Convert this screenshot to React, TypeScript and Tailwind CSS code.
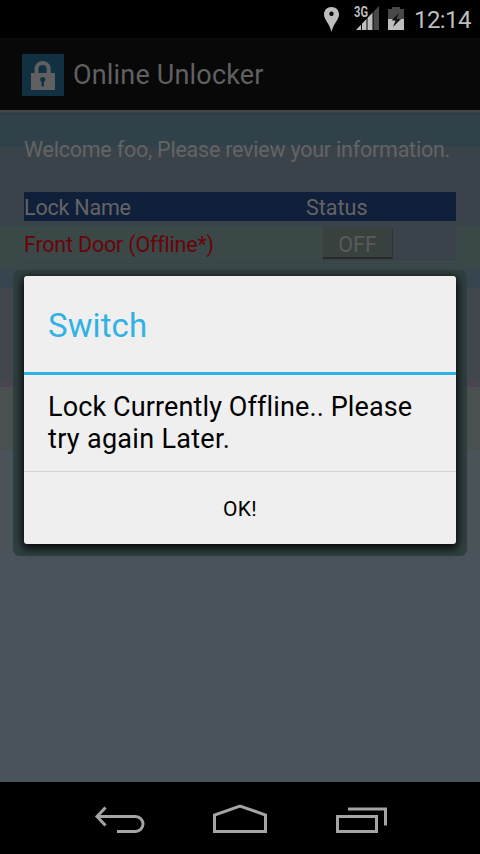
import React from "react";

function StatusBar() {
  return (
    <div className="flex h-[38px] items-center justify-end bg-black pr-[9px] text-[#bebebe]">
      <svg className="mr-[13px] h-[26px] w-[18px]" viewBox="0 0 18 26">
        <path fillRule="evenodd" d="M8.5 1C4 1 1 4 1 8.5C1 14 6.5 17 8.5 26C10.500 17 16 14 16 8.500C16 4 13 1 8.500 1ZM8.500 5.500A2.200 2.200 0 1 1 8.500 9.900A2.200 2.200 0 1 1 8.500 5.500Z" fill="#bebebe" />
      </svg>
      <svg className="mr-[8px] h-[26px] w-[26px] overflow-visible" viewBox="0 0 26 26">
        <path d="M2 24L25 0V24Z" fill="#484848" />
        <path d="M2 24L19 6.300V24Z" fill="#bebebe" />
        <path d="M7.500 0V26M13 0V26M19 0V26" stroke="#000" strokeWidth="1" />
        <text x="0" y="11" fontFamily="Roboto" fontWeight="700" fontSize="14.500" textLength="14" lengthAdjust="spacingAndGlyphs" fill="#bebebe" stroke="#000" strokeWidth="1" paintOrder="stroke">3G</text>
      </svg>
      <svg className="mr-[10px] h-[24px] w-[16px]" viewBox="0 0 16 24">
        <path d="M0 2H4V0H12V2H16V12H0Z" fill="#484848" />
        <path d="M0 12H16V23H0Z" fill="#bebebe" />
        <path d="M11 6L3.500 13.500H7.500L5 20L13 12H8.500Z" fill="#111" />
      </svg>
      <span className="w-[57px] whitespace-nowrap pt-[2px] text-[24px] leading-none tracking-[-0.6px]">12:14</span>
    </div>
  );
}

function ActionBar() {
  return (
    <div className="flex h-[72px] items-center border-t border-[#081004] bg-[#080808] pl-[22px]">
      <svg className="h-[42px] w-[42px]" viewBox="0 0 42 42">
        <path d="M0 0H42V42H0Z" fill="#113142" />
        <path d="M14.500 20V14A6.200 6.200 0 0 1 26.700 14V20" fill="none" stroke="#606060" strokeWidth="4" />
        <path d="M9 19H33V36H9Z" fill="#606060" />
        <circle cx="20.700" cy="25.500" r="2.500" fill="#113142" />
        <path d="M19.500 26H22V32.500H19.500Z" fill="#113142" />
      </svg>
      <span className="ml-[9px] pt-[2px] text-[27px] leading-none tracking-[0.18px] text-[#606060]">Online Unlocker</span>
    </div>
  );
}

function LockTable() {
  return (
    <div className="mx-6 mt-[28px] text-[21.5px] tracking-[-0.2px] text-[#646464]">
      <div className="flex h-[29px] items-center bg-[#10203a] pt-[3px]">
        <span className="w-[282px]">Lock Name</span>
        <span className="tracking-normal">Status</span>
      </div>
      <div className="mt-[5px] flex h-[38px] border-b border-[#3a424a]">
        <span className="w-[299px] pt-[3px] text-[#6a0408]">Front Door (Offline*)</span>
        <div className="h-[35px] flex-1 bg-[#3a424a]">
          <div className="mt-[2px] h-[31px] w-[70px] border-b-2 border-r border-b-[#282a2a] border-r-[#303534] bg-[#39413f] text-center leading-[33px] tracking-normal text-[#5a5a5a]">OFF</div>
        </div>
      </div>
      <div className="ml-[299px] mt-[6px] h-[10px] w-[70px] bg-[#2a302d]" />
    </div>
  );
}

function Dialog() {
  return (
    <div className="absolute left-[13px] top-[270px] rounded-[7px] bg-[#304040] px-[11px] pb-[12px] pt-[6px]">
      <div className="h-[268px] w-[432px] rounded-[3px] bg-[#efefef] text-black shadow-[0_3px_8px_2px_rgba(0,0,0,0.85)]">
        <div className="flex h-[99px] items-center border-b-[3px] border-[#31b2e4] pl-6 pt-[4px] text-[33px] tracking-[0.1px] text-[#31b2e4]">Switch</div>
        <p className="h-[96px] pl-6 pt-[16px] text-[27px] leading-[32px] tracking-[0.12px]">Lock Currently Offline.. Please<br /><span className="tracking-[0.3px]">try again Later.</span></p>
        <button className="flex h-[73px] w-full items-center justify-center border-t border-[#d3d3d3] pt-[3px] text-[21px] tracking-[0.3px]">OK!</button>
      </div>
    </div>
  );
}

function NavBar() {
  return (
    <div className="h-[72px] bg-black">
      <svg className="h-[72px] w-[480px]" viewBox="0 782 480 72" fill="none" stroke="#a4a4a4" strokeWidth="3">
        <path d="M105.500 807.500L97 816.500L105.500 825.500M97 816.500H135.500A7.500 7.500 0 0 1 135.500 831.500H117" />
        <path d="M214.500 831.500V815L240 806L265.500 815V831.500Z" />
        <path d="M337.500 816.500H376.500V831.500H337.500ZM348 809H385.500V825.500" />
      </svg>
    </div>
  );
}

export default function App() {
  return (
    <main className="relative flex h-[854px] w-[480px] flex-col overflow-hidden bg-black font-[Roboto,sans-serif] [font-variant-ligatures:none]">
      <StatusBar />
      <ActionBar />
      <div className="flex-1 border-t-2 border-[#464646] bg-[linear-gradient(#30414a_0_1px,#303c48_1px_3px,#30414a_3px_35px,#3a424a_35px_114px,#3a4848_114px_158px,#364650_158px_176px,#42464f_176px_270px,#4a464f_270px_275px,#485050_275px_338px,#4a525a_338px)]">
        <p className="ml-6 mt-[23px] whitespace-nowrap text-[21.5px] leading-[29px] tracking-[-0.23px] text-[#646464]">Welcome foo, Please review your information.</p>
        <LockTable />
      </div>
      <NavBar />
      <Dialog />
    </main>
  );
}
